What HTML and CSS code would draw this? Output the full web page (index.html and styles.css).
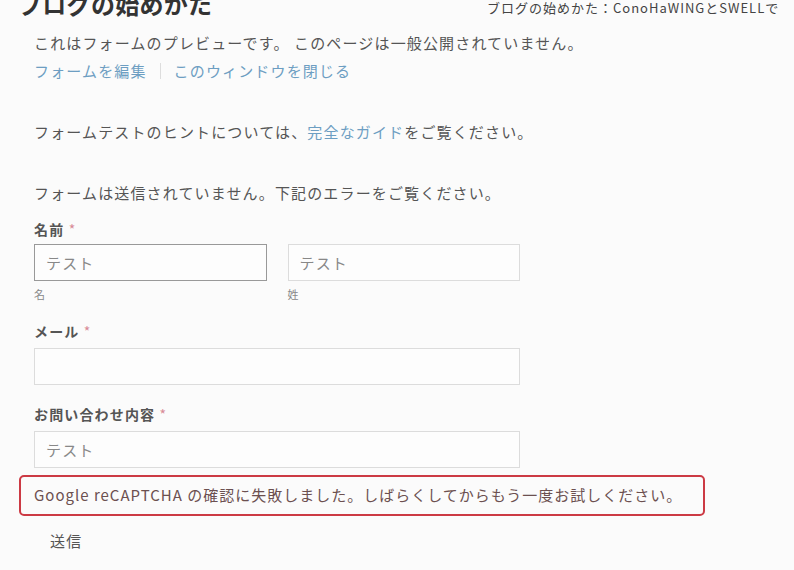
FILE: index.html
```html
<!DOCTYPE html>
<html lang="ja">
<head>
	<meta charset="utf-8">
	<title>ブログの始めかた</title>
	<link rel="stylesheet" href="styles.css">
</head>
<body>
	<header class="topbar">
		<div class="site-title">ブログの始めかた</div>
		<div class="page-title">ブログの始めかた：ConoHaWINGとSWELLで</div>
	</header>

	<section class="preview">
		<p class="notice">これはフォームのプレビューです。 このページは一般公開されていません。</p>
		<p class="actions">
			<a href="#">フォームを編集</a>
			<span class="sep"></span>
			<a href="#">このウィンドウを閉じる</a>
		</p>
		<p class="hint">フォームテストのヒントについては、<a href="#">完全なガイド</a>をご覧ください。</p>
		<p class="form-error">フォームは送信されていません。下記のエラーをご覧ください。</p>

		<!-- Form -->
		<form class="contact">
			<div class="field">
				<label class="label">名前 <span class="req">*</span></label>
				<div class="name-row">
					<div class="name-col">
						<input type="text" class="box focused" value="テスト">
						<span class="sub">名</span>
					</div>
					<div class="name-col">
						<input type="text" class="box" value="テスト">
						<span class="sub">姓</span>
					</div>
				</div>
			</div>

			<div class="field">
				<label class="label">メール <span class="req">*</span></label>
				<input type="text" class="box wide" value="">
			</div>

			<div class="field">
				<label class="label">お問い合わせ内容 <span class="req">*</span></label>
				<input type="text" class="box wide" value="テスト">
			</div>

			<div class="captcha-error">Google reCAPTCHA の確認に失敗しました。しばらくしてからもう一度お試しください。</div>

			<div class="submit">送信</div>
		</form>
	</section>
</body>
</html>
```

FILE: styles.css
```css
html, body {
  margin: 0;
  background-color: #fbfbfb;
  overflow: hidden;
}

body {
  font-family: "Noto Sans CJK JP", "Noto Sans", sans-serif;
  color: #555;
  font-size: 15px;
  letter-spacing: 1.15px;
}

/* Header */
.topbar {
  display: grid;
  grid-template-columns: 469px 1fr;
  align-items: start;
  padding-left: 18px;
  margin-top: -11px;
  height: 34px;
  white-space: nowrap;
}
.site-title {
  font-size: 24px;
  font-weight: bold;
  line-height: 30px;
  color: #333;
  letter-spacing: 0.3px;
}
.page-title {
  font-size: 13px;
  line-height: 14px;
  padding-top: 12px;
  color: #444;
  letter-spacing: 1px;
}

/* Preview content */
.preview {
  padding-left: 34px;
}
.preview p {
  margin: 0;
  line-height: 28px;
}
.notice {
  padding-top: 6px;
}
.actions {
  display: flex;
  align-items: center;
}
.sep {
  display: inline-block;
  width: 1px;
  height: 16px;
  background-color: #ddd;
  margin: 0 13px;
}
a {
  color: #6d9ec2;
  text-decoration: none;
}
.hint {
  margin-top: 33px !important;
}
.form-error {
  margin-top: 33px !important;
}

/* Form */
.contact {
  width: 486px;
}
.field {
  margin-top: 11px;
}
.field + .field {
  margin-top: 18px;
}
.label {
  display: block;
  font-size: 14px;
  font-weight: bold;
  line-height: 22px;
  color: #555;
  margin-bottom: 4px;
}
.field + .field .label {
  margin-bottom: 6px;
}
.req {
  color: #d88a96;
  font-weight: normal;
}
.name-row {
  display: flex;
  gap: 21px;
}
.name-col {
  flex: 1;
  display: flex;
  flex-direction: column;
}
.box {
  box-sizing: border-box;
  height: 37px;
  border: 1px solid #dcdcdc;
  background-color: #fdfdfd;
  padding: 0 11px;
  font-family: inherit;
  font-size: 15px;
  letter-spacing: 1.15px;
  color: #888;
  outline: none;
}
.box.focused {
  border-color: #999;
}
.box.wide {
  width: 100%;
}
.sub {
  font-size: 11px;
  line-height: 16px;
  margin-top: 5px;
  color: #888;
}

.captcha-error {
  margin: 7px -185px 0 -15px;
  padding: 0 13px;
  height: 41px;
  box-sizing: border-box;
  border: 2px solid #cc3a44;
  border-radius: 5px;
  line-height: 36px;
  color: #6c5050;
  white-space: nowrap;
  letter-spacing: 1px;
}

.submit {
  margin-left: 16px;
  margin-top: 12px;
  line-height: 26px;
  color: #555;
}
```
